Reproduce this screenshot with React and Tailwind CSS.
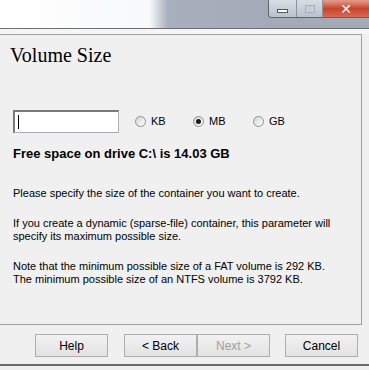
import React, { useState } from "react";

const Radio = ({ label, checked, onClick }) => (
  <label className="flex items-center gap-[5px] cursor-default" onClick={onClick}>
    <span className="w-[11px] h-[11px] rounded-full border border-[#8e8f8f] bg-gradient-to-br from-[#d4d4d4] to-white flex items-center justify-center">
      {checked && <span className="w-[5px] h-[5px] rounded-full bg-[#1a1a1a]" />}
    </span>
    <span>{label}</span>
  </label>
);

const Button = ({ children, disabled }) => (
  <button
    disabled={disabled}
    className={
      "w-[73px] h-[23px] border border-[#adadad] bg-gradient-to-b from-[#f2f2f2] to-[#e2e2e2] text-[12px] " +
      (disabled ? "text-[#a0a0a0]" : "text-black")
    }
  >
    {children}
  </button>
);

export default function App() {
  const [unit, setUnit] = useState("MB");

  return (
    <div className="w-[369px] h-[370px] bg-[#f0f0f0] overflow-hidden relative font-['Liberation_Sans',sans-serif] text-[11px] text-black">
      {/* title bar */}
      <div className="h-[28px] flex bg-gradient-to-r from-white via-[#f6f7f9] to-[#f6f7f9] relative">
        <div className="absolute left-[150px] top-0 w-[118px] h-[28px] bg-gradient-to-r from-[#f6f7f9] via-[#a8b0bd] via-15% to-[#a3abb8]" />
        <div className="absolute right-0 top-0 h-[28px] w-[101px] bg-[#a3abb8]" />
        <div className="absolute left-[268px] top-0 flex h-[18px] rounded-bl-[4px] border border-t-0 border-[#5c6470] overflow-hidden">
          <div className="w-[28px] h-full bg-gradient-to-b from-[#d9dee6] to-[#b9c1cd] border-r border-[#8b939f] flex items-center justify-center">
            <span className="w-[11px] h-[4px] bg-white border border-[#53585f] mt-[4px]" />
          </div>
          <div className="w-[26px] h-full bg-gradient-to-b from-[#d9dee6] to-[#b9c1cd] border-r border-[#8b939f] flex items-center justify-center">
            <span className="w-[10px] h-[8px] border border-[#a9b0ba] bg-[#c7ced8]" />
          </div>
          <div className="w-[46px] h-full bg-gradient-to-b from-[#e59b89] via-[#c8442c] to-[#d56a50] flex items-center justify-center">
            <span className="text-white font-bold text-[14px] leading-none font-['DejaVu_Sans',sans-serif]">✕</span>
          </div>
        </div>
      </div>
      <div className="h-[1px] bg-[#6f6f6f]" />
      <div className="h-[5px] bg-[#f5f5f5]" />

      {/* panel */}
      <div className="w-[362px] h-[291px] border border-[#a0a0a0] border-l-0 bg-[#f0f0f0] pl-[10px] pr-2">
        <h1 className="font-['Liberation_Serif',serif] text-[20px] leading-none mt-[10px]">Volume Size</h1>

        <div className="flex items-center mt-[45px] pl-[3px]">
          <div className="w-[106px] h-[23px] bg-white border border-[#abadb3] border-t-[#7a7a7a] border-l-[#7a7a7a] border-t-2 border-l-2 flex items-center pl-[3px]">
            <span className="w-[1px] h-[14px] bg-black" />
          </div>
          <div className="flex ml-[16px]">
            <div className="w-[58px]"><Radio label="KB" checked={unit === "KB"} onClick={() => setUnit("KB")} /></div>
            <div className="w-[60px]"><Radio label="MB" checked={unit === "MB"} onClick={() => setUnit("MB")} /></div>
            <Radio label="GB" checked={unit === "GB"} onClick={() => setUnit("GB")} />
          </div>
        </div>

        <p className="font-bold text-[13px] mt-[14px] pl-[3px] leading-none">Free space on drive C:\ is 14.03 GB</p>

        <div className="pl-[3px] leading-[13px] mt-[27px]">
          <p>Please specify the size of the container you want to create.</p>
          <p className="mt-[17px]">If you create a dynamic (sparse-file) container, this parameter will<br />specify its maximum possible size.</p>
          <p className="mt-[17px]">Note that the minimum possible size of a FAT volume is 292 KB.<br />The minimum possible size of an NTFS volume is 3792 KB.</p>
        </div>
      </div>

      {/* buttons */}
      <div className="flex mt-[9px] pl-[35px]">
        <Button>Help</Button>
        <div className="ml-[16px] flex">
          <Button>&lt; Back</Button>
          <Button disabled>Next &gt;</Button>
        </div>
        <div className="ml-[15px]">
          <Button>Cancel</Button>
        </div>
      </div>
      <div className="absolute left-0 right-0 top-[364px] h-[2px] bg-[#6a6a6a]" />
    </div>
  );
}
